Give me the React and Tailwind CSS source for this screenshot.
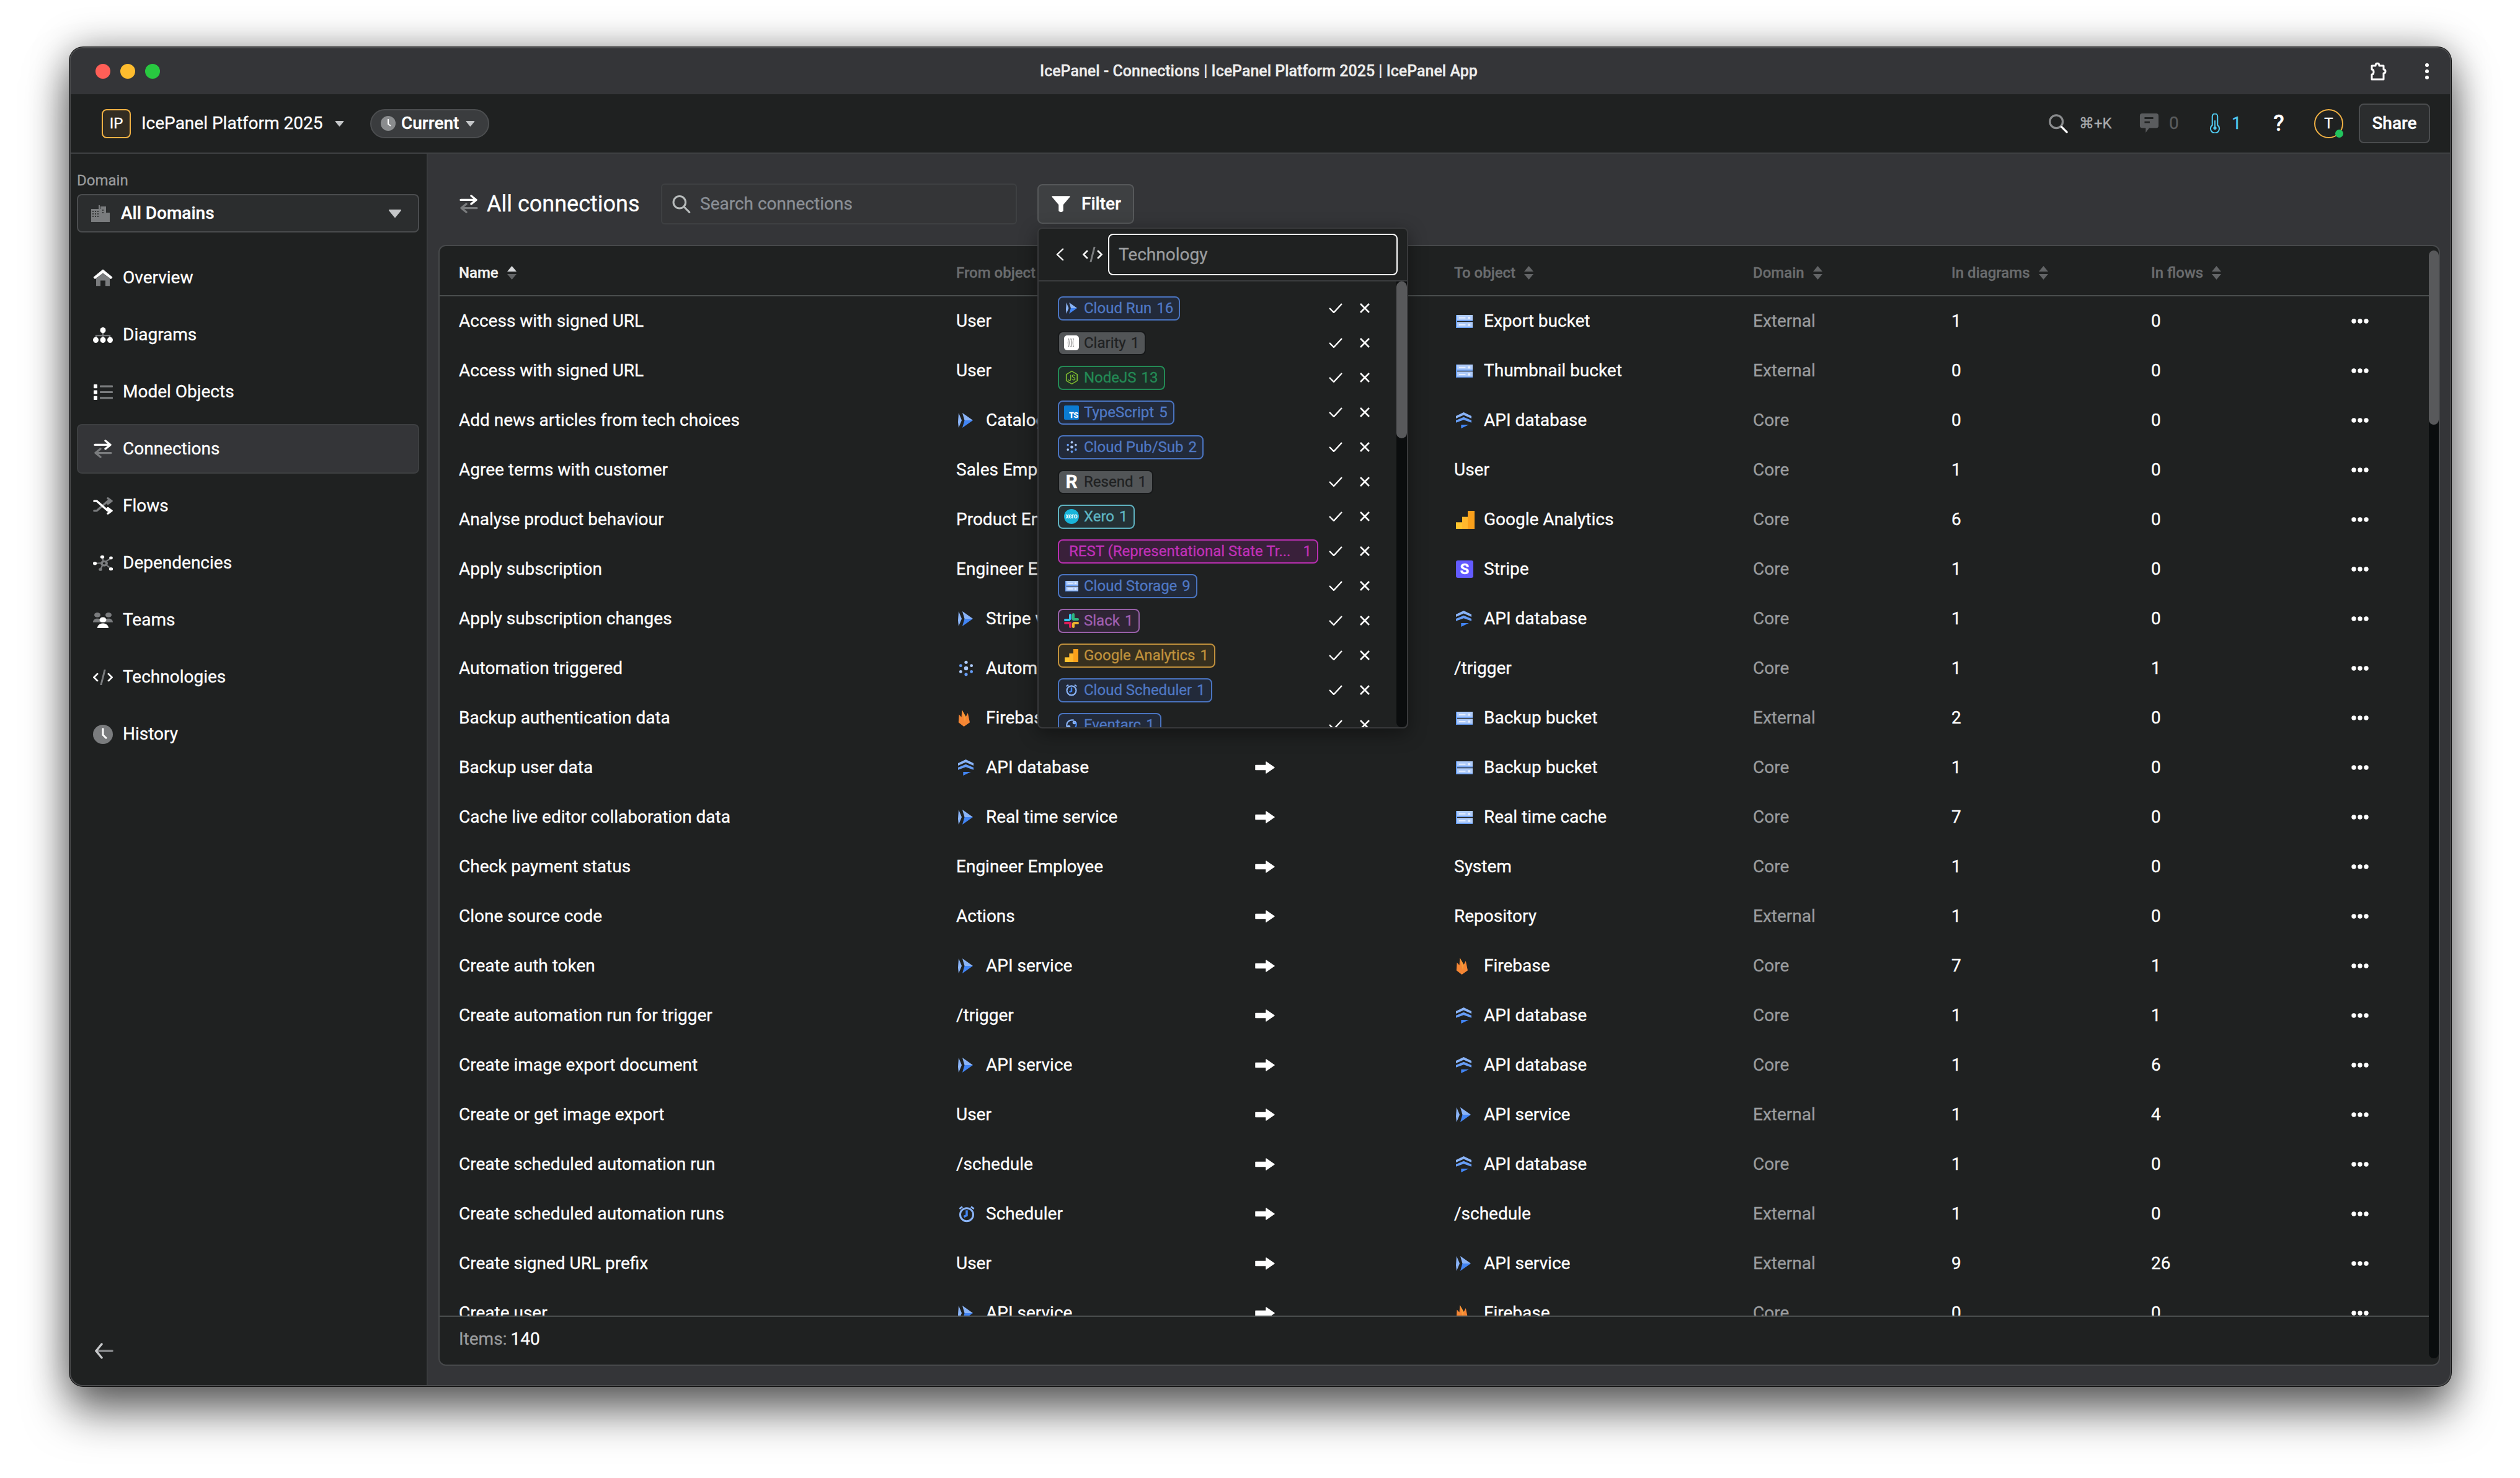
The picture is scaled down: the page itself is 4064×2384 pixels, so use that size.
import React from "react";

const Caret = ({ big }) => (
  <svg width={big ? 22 : 15} height={big ? 13 : 9} viewBox="0 0 22 13" className="shrink-0">
    <path d="M2 1 H20 L11 12 Z" fill="#c4c6c8" stroke="#c4c6c8" strokeWidth="2" strokeLinejoin="round" />
  </svg>
);

const W = "#ffffff";
const G = "#7a7c7e";

const NAV_H = { home: 28, diagrams: 25, list: 25, exchange: 30, flows: 28, deps: 26, teams: 25, code: 25, history: 31 };

const NavIcon = ({ k }) => {
  const p = { width: 32, height: NAV_H[k] || 31, viewBox: "0 0 32 32", preserveAspectRatio: "none", className: "shrink-0" };
  if (k === "home")
    return (
      <svg {...p}>
        <path d="M5 17 L16 8 L27 17 V31 H20 V21 H12 V31 H5 Z" fill={G} />
        <path d="M16 1 L31 15 L29 18 L16 7 L3 18 L1 15 Z" fill={W} stroke={W} strokeLinejoin="round" />
      </svg>
    );
  if (k === "diagrams")
    return (
      <svg {...p}>
        <path d="M16 10 V23 M5 23 V17 H27 V23" stroke={G} strokeWidth="2.4" fill="none" />
        <ellipse cx="16" cy="6" rx="4.5" ry="6" fill={W} />
        <ellipse cx="4.5" cy="26" rx="4.5" ry="6" fill={W} />
        <ellipse cx="16" cy="26" rx="4.5" ry="6" fill={W} />
        <ellipse cx="27.5" cy="26" rx="4.5" ry="6" fill={W} />
      </svg>
    );
  if (k === "list")
    return (
      <svg {...p}>
        <rect x="1" y="0" width="6" height="8" rx="1" fill={W} />
        <rect x="1" y="12" width="6" height="8" rx="1" fill={W} />
        <rect x="1" y="24" width="6" height="8" rx="1" fill={W} />
        <rect x="11" y="2" width="21" height="4" rx="1" fill={G} />
        <rect x="11" y="14" width="21" height="4" rx="1" fill={G} />
        <rect x="11" y="26" width="21" height="4" rx="1" fill={G} />
      </svg>
    );
  if (k === "exchange")
    return (
      <svg {...p} fill="none" strokeWidth="3.4" strokeLinecap="round" strokeLinejoin="round">
        <path d="M3 9 H27 M20 2 L28 9 L20 16" stroke={W} />
        <path d="M29 23 H5 M12 16 L4 23 L12 30" stroke={G} />
      </svg>
    );
  if (k === "flows")
    return (
      <svg {...p} fill="none" strokeWidth="3.6" strokeLinecap="round" strokeLinejoin="round">
        <path d="M2 25 H6 L24 7 H27 M24 2 L30 7 L24 12" stroke={G} />
        <path d="M2 7 H6 L24 25 H27 M24 20 L30 25 L24 30" stroke={W} />
      </svg>
    );
  if (k === "deps")
    return (
      <svg {...p}>
        <path d="M15 4 L17 16 M3 17 L17 16 M30 6 L17 16 M30 28 L17 16 M17 16 L12 29" stroke={G} strokeWidth="2.4" />
        <circle cx="18" cy="17" r="6" fill={G} />
        <circle cx="18" cy="17" r="2.2" fill="#1f2121" />
        <circle cx="15" cy="4" r="3.2" fill={W} />
        <circle cx="3" cy="17" r="3.2" fill={W} />
        <circle cx="29" cy="6" r="2.8" fill={W} />
        <circle cx="29" cy="28" r="3.2" fill={W} />
        <circle cx="12" cy="29" r="2.8" fill={G} />
      </svg>
    );
  if (k === "teams")
    return (
      <svg {...p}>
        <circle cx="7" cy="5" r="5" fill={G} />
        <circle cx="25" cy="5" r="5" fill={G} />
        <path d="M0 20 C0 10 14 10 14 20 Z M18 20 C18 10 32 10 32 20 Z" fill={G} />
        <circle cx="16" cy="15" r="5.5" fill={W} />
        <path d="M7 32 C7 19 25 19 25 32 Z" fill={W} />
      </svg>
    );
  if (k === "code")
    return (
      <svg {...p} fill="none" strokeWidth="3" strokeLinecap="round" strokeLinejoin="round">
        <path d="M7 9 L1.5 16 L7 23 M25 9 L30.5 16 L25 23" stroke={W} />
        <path d="M19 1 L13 31" stroke={G} />
      </svg>
    );
  return (
    <svg {...p}>
      <ellipse cx="16" cy="16" rx="16" ry="16" fill={G} />
      <path d="M16 7 V17 L21 22" stroke={W} strokeWidth="3" fill="none" strokeLinecap="round" />
    </svg>
  );
};

const RunIcon = ({ w = 24, h = 24 }) => (
  <svg width={w} height={h} viewBox="0 0 24 32" preserveAspectRatio="none" className="shrink-0">
    <path d="M1 0 L6 16 L1 32 L0 20 Z" fill="#8ab4f8" />
    <path d="M7 0 L24 16 H10.5 Z" fill="#8ab4f8" />
    <path d="M10.5 16 H24 L7 32 Z" fill="#4285f4" />
  </svg>
);
const DbIcon = ({ w = 25, h = 26 }) => (
  <svg width={w} height={h} viewBox="0 0 24 34" preserveAspectRatio="none" className="shrink-0">
    <path d="M12 0 L24 8 V13 L12 6 L0 13 V8 Z" fill="#8ab4f8" />
    <path d="M12 10 L24 17 V22 L12 16 L0 22 V17 Z" fill="#669df6" />
    <path d="M8 26 L20 26 L8 34 Z" fill="#4285f4" />
  </svg>
);
const StorageIcon = ({ w = 27, h = 21 }) => (
  <svg width={w} height={h} viewBox="0 0 28 28" preserveAspectRatio="none" className="shrink-0">
    <rect x="0" y="0" width="28" height="13" fill="#aecbfa" />
    <rect x="0" y="15" width="28" height="13" fill="#aecbfa" />
    <rect x="0" y="0" width="2" height="28" fill="#669df6" />
    <rect x="0" y="11" width="28" height="2" fill="#669df6" />
    <rect x="0" y="26" width="28" height="2" fill="#669df6" />
    <rect x="5" y="5" width="11" height="2.5" fill="#e8f0fe" />
    <rect x="20" y="4" width="4" height="4.5" fill="#e8f0fe" />
    <rect x="5" y="20" width="11" height="2.5" fill="#e8f0fe" />
    <rect x="20" y="19" width="4" height="4.5" fill="#e8f0fe" />
  </svg>
);
const FireIcon = () => (
  <svg width="19" height="27" viewBox="0 0 24 32" preserveAspectRatio="none" className="shrink-0">
    <path d="M2 9 L7 14 L8 0 L16 13 L20 6 L24 24 L12 32 L1 24 Z" fill="#f58634" />
    <path d="M8 0 L16 13 L14 24 Z" fill="#fbb03b" opacity="0.5" />
  </svg>
);
const GaIcon = ({ w = 30, h = 29 }) => (
  <svg width={w} height={h} viewBox="0 0 30 30" preserveAspectRatio="none" className="shrink-0">
    <rect x="0" y="19" width="11" height="11" fill="#ffc42e" />
    <rect x="10" y="10" width="10" height="20" fill="#ffb72d" />
    <rect x="19" y="0" width="11" height="30" fill="#f9a01b" />
  </svg>
);
const PubIcon = ({ w = 24, h = 24, c1 = "#aecbfa", c2 = "#669df6" }) => (
  <svg width={w} height={h} viewBox="0 0 24 24" preserveAspectRatio="none" className="shrink-0">
    <circle cx="12" cy="12" r="3" fill={c1} />
    <circle cx="12" cy="3" r="2.4" fill={c1} />
    <circle cx="4" cy="8" r="2.2" fill={c2} />
    <circle cx="20" cy="8" r="2.2" fill={c1} />
    <circle cx="4" cy="17" r="2.2" fill={c1} />
    <circle cx="20" cy="17" r="2.2" fill={c2} />
    <circle cx="12" cy="21" r="2.4" fill={c2} />
  </svg>
);
const SchedIcon = ({ s = 24 }) => (
  <svg width={s} height={s} viewBox="0 0 24 24" className="shrink-0" fill="none">
    <circle cx="12" cy="13" r="9" stroke="#8ab4f8" strokeWidth="2.6" />
    <path d="M12 7 V14 L8 16" stroke="#4285f4" strokeWidth="3" />
    <path d="M2 5 L6 2 M22 5 L18 2" stroke="#8ab4f8" strokeWidth="2.4" />
  </svg>
);
const StripeIcon = () => (
  <span className="w-[28px] h-[28px] shrink-0 rounded-[3px] bg-[#635bff] text-white text-[24px] font-bold leading-[28px] text-center">S</span>
);

const objIcon = (k) => {
  if (k === "run") return <RunIcon />;
  if (k === "db") return <DbIcon />;
  if (k === "st") return <StorageIcon />;
  if (k === "fire") return <FireIcon />;
  if (k === "ga") return <GaIcon />;
  if (k === "pub") return <PubIcon w={26} h={26} />;
  if (k === "sched") return <SchedIcon s={28} />;
  if (k === "stripe") return <StripeIcon />;
  return null;
};

const Obj = ({ t, i }) => (
  <div className="flex items-center whitespace-nowrap">
    {i ? <span className="w-[48px] pl-[3px] flex items-center shrink-0">{objIcon(i)}</span> : null}
    <span>{t}</span>
  </div>
);

const Arrow = () => (
  <svg width="32" height="20" viewBox="0 0 32 20">
    <path d="M1 6.5 H18 V1 L31 10 L18 19 V13.5 H1 Z" fill="#fff" stroke="#fff" strokeWidth="1.5" strokeLinejoin="round" />
  </svg>
);

const Sort = ({ active }) => (
  <svg width="17" height="22" viewBox="0 0 17 22" className="shrink-0">
    <path d="M8.5 0 L16 9 H1 Z" fill={active ? "#d8dadc" : "#626466"} />
    <path d="M8.5 22 L16 13 H1 Z" fill="#626466" />
  </svg>
);

const Dots = () => (
  <svg width="28" height="8" viewBox="0 0 28 8" className="justify-self-center">
    <circle cx="4" cy="4" r="3.7" fill="#fff" />
    <circle cx="14" cy="4" r="3.7" fill="#fff" />
    <circle cx="24" cy="4" r="3.7" fill="#fff" />
  </svg>
);

const rows = [
  ["Access with signed URL", "User", "", "Export bucket", "st", "External", 1, 0],
  ["Access with signed URL", "User", "", "Thumbnail bucket", "st", "External", 0, 0],
  ["Add news articles from tech choices", "Catalog service", "run", "API database", "db", "Core", 0, 0],
  ["Agree terms with customer", "Sales Employee", "", "User", "", "Core", 1, 0],
  ["Analyse product behaviour", "Product Engineer", "", "Google Analytics", "ga", "Core", 6, 0],
  ["Apply subscription", "Engineer Employee", "", "Stripe", "stripe", "Core", 1, 0],
  ["Apply subscription changes", "Stripe webhook", "run", "API database", "db", "Core", 1, 0],
  ["Automation triggered", "Automation", "pub", "/trigger", "", "Core", 1, 1],
  ["Backup authentication data", "Firebase", "fire", "Backup bucket", "st", "External", 2, 0],
  ["Backup user data", "API database", "db", "Backup bucket", "st", "Core", 1, 0],
  ["Cache live editor collaboration data", "Real time service", "run", "Real time cache", "st", "Core", 7, 0],
  ["Check payment status", "Engineer Employee", "", "System", "", "Core", 1, 0],
  ["Clone source code", "Actions", "", "Repository", "", "External", 1, 0],
  ["Create auth token", "API service", "run", "Firebase", "fire", "Core", 7, 1],
  ["Create automation run for trigger", "/trigger", "", "API database", "db", "Core", 1, 1],
  ["Create image export document", "API service", "run", "API database", "db", "Core", 1, 6],
  ["Create or get image export", "User", "", "API service", "run", "External", 1, 4],
  ["Create scheduled automation run", "/schedule", "", "API database", "db", "Core", 1, 0],
  ["Create scheduled automation runs", "Scheduler", "sched", "/schedule", "", "External", 1, 0],
  ["Create signed URL prefix", "User", "", "API service", "run", "External", 9, 26],
  ["Create user", "API service", "run", "Firebase", "fire", "Core", 0, 0],
];

const gridCols = "grid grid-cols-[802px_482px_321px_482px_320px_322px_320px_34px] items-center";

const Head = ({ t, active }) => (
  <div className={"flex items-center gap-[13px] text-[24px] font-medium " + (active ? "text-[#f0f0f0]" : "text-[#6a6c6e]")}>
    <span>{t}</span>
    <Sort active={active} />
  </div>
);

const ClarityIcon = () => (
  <span className="w-[24px] h-[24px] rounded-[5px] bg-white flex items-center justify-center shrink-0">
    <svg width="14" height="16" viewBox="0 0 16 18" fill="none" stroke="#666" strokeWidth="1">
      <path d="M3 1 C1 6 1 12 3 17 M6 1 C4 6 4 12 6 17 M9 1 C7 6 7 12 9 17 M12 1 C10 6 10 12 12 17" />
    </svg>
  </span>
);
const NodeIcon = () => (
  <svg width="21" height="22" viewBox="0 0 24 30" preserveAspectRatio="none" className="shrink-0" fill="none">
    <path d="M12 1 L22 8 V22 L12 29 L2 22 V8 Z" stroke="#7cb82f" strokeWidth="2" />
    <path d="M10 9 V19 C10 22 6 22 6 19 M18 11 C16 8 13 9 13 12 C13 15 18 14 18 18 C18 21 14 21 13 19" stroke="#7cb82f" strokeWidth="1.6" />
  </svg>
);
const TsIcon = () => (
  <span className="w-[24px] h-[23px] bg-[#0b7bd1] rounded-[2px] shrink-0 text-white text-[12px] font-bold leading-[14px] flex items-end justify-end pr-[1px]">TS</span>
);
const XeroIcon = () => (
  <span className="w-[24px] h-[24px] rounded-full bg-[#19b5da] shrink-0 text-white text-[10px] leading-[24px] text-center">xero</span>
);
const SlackIcon = () => (
  <svg width="24" height="24" viewBox="0 0 24 24" className="shrink-0">
    <rect x="0" y="9" width="10" height="4" rx="2" fill="#36c5f0" />
    <rect x="8" y="1" width="4" height="10" rx="2" fill="#36c5f0" />
    <rect x="13" y="0" width="4" height="11" rx="2" fill="#2eb67d" />
    <rect x="13" y="8" width="11" height="4" rx="2" fill="#2eb67d" />
    <rect x="14" y="14" width="10" height="4" rx="2" fill="#ecb22e" />
    <rect x="13" y="15" width="4" height="9" rx="2" fill="#ecb22e" />
    <rect x="8" y="14" width="4" height="10" rx="2" fill="#e01e5a" />
    <rect x="0" y="14" width="10" height="4" rx="2" fill="#e01e5a" />
  </svg>
);
const EventIcon = () => (
  <svg width="22" height="22" viewBox="0 0 24 24" className="shrink-0" fill="none" stroke="#8ab4f8" strokeWidth="2.4">
    <path d="M4 16 C2 8 8 2 16 4" />
    <path d="M20 8 C22 16 16 22 8 20" stroke="#4285f4" />
    <circle cx="7" cy="16" r="2" fill="#8ab4f8" />
    <circle cx="17" cy="8" r="2" fill="#4285f4" />
  </svg>
);

const blue = "border-[#4a74c0] bg-[#222a3a] text-[#4f78c4]";
const gray = "border-[#17191a] bg-[#525557] text-[#1f2122]";
const chips = [
  ["Cloud Run", 16, blue, <RunIcon w={18} h={18} />],
  ["Clarity", 1, gray, <ClarityIcon />],
  ["NodeJS", 13, "border-[#238a55] bg-[#1e2f28] text-[#238a55]", <NodeIcon />],
  ["TypeScript", 5, blue, <TsIcon />],
  ["Cloud Pub/Sub", 2, blue, <PubIcon w={19} h={20} />],
  ["Resend", 1, gray, <span className="w-[24px] text-white text-[30px] font-bold leading-none shrink-0 text-center">R</span>],
  ["Xero", 1, "border-[#5fb2c0] bg-[#243135] text-[#5fb7c4]", <XeroIcon />],
  ["REST (Representational State Tr...", 1, "border-[#b82fb0] bg-[#39203a] text-[#c030b8]", null],
  ["Cloud Storage", 9, blue, <StorageIcon w={21} h={17} />],
  ["Slack", 1, "border-[#9860a8] bg-[#2f2535] text-[#a05fb0]", <SlackIcon />],
  ["Google Analytics", 1, "border-[#c0903c] bg-[#37301f] text-[#c0923c]", <GaIcon w={22} h={21} />],
  ["Cloud Scheduler", 1, blue, <SchedIcon s={20} />],
  ["Eventarc", 1, blue, <EventIcon />],
];

const Chip = ({ c }) => {
  const rest = c[3] === null;
  return (
    <div className={"h-[39px] rounded-[8px] border-2 flex items-center text-[24px] whitespace-nowrap pr-[9px] " + c[2] + (rest ? " pl-[16px]" : " pl-[8px]")}>
      {c[3] ? <span className="w-[24px] flex justify-center mr-[8px] shrink-0">{c[3]}</span> : null}
      <span>{c[0]}</span>
      <span className={rest ? "ml-[20px]" : "ml-[8px]"}>{c[1]}</span>
    </div>
  );
};

export default function App() {
  return (
    <div className="w-[4064px] h-[2384px] bg-white overflow-hidden pt-[76px] pl-[112px] font-[family-name:Roboto,sans-serif] text-[28px] text-white [-webkit-text-stroke:0.3px]">
      <div className="relative w-[3841px] h-[2160px] rounded-[22px] overflow-hidden flex flex-col border-2 border-[#4b4c4e] bg-[#343538] shadow-[0_0_0_1px_#111111,0_42px_70px_rgba(0,0,0,0.55),0_0_60px_rgba(0,0,0,0.35)]">
        {/* title bar */}
        <div className="h-[74px] shrink-0 bg-[#343538] flex items-center pl-[40px] pr-[33px]">
          <div className="flex gap-[16px]">
            <span className="w-[24px] h-[24px] rounded-full bg-[#ff5f57]" />
            <span className="w-[24px] h-[24px] rounded-full bg-[#febc2e]" />
            <span className="w-[24px] h-[24px] rounded-full bg-[#28c840]" />
          </div>
          <div className="flex-1 text-center text-[25px] font-medium text-[#eeeeee] pr-[16px]">
            IcePanel - Connections | IcePanel Platform 2025 | IcePanel App
          </div>
          <svg width="32" height="32" viewBox="0 0 32 32" fill="none" stroke="#fff" strokeWidth="3" strokeLinejoin="round" className="mr-[60px]">
            <path d="M7 7 H13 C13 2 19 2 19 7 H26 V13 C30 13 30 19 26 19 V29 H7 V21 C11 21 11 13 7 13 Z" />
          </svg>
          <svg width="8" height="28" viewBox="0 0 8 28">
            <circle cx="4" cy="4" r="3" fill="#fff" />
            <circle cx="4" cy="14" r="3" fill="#fff" />
            <circle cx="4" cy="24" r="3" fill="#fff" />
          </svg>
        </div>

        {/* top bar */}
        <div className="h-[96px] shrink-0 bg-[#1f2121] border-b-2 border-[#3f4143] flex items-center pl-[50px] pr-[32px]">
          <div className="w-[47px] h-[47px] rounded-[8px] border-2 border-[#f2b244] bg-[#322c22] flex items-center justify-center text-[24px]">IP</div>
          <div className="ml-[17px] w-[312px] whitespace-nowrap">IcePanel Platform 2025</div>
          <Caret />
          <div className="ml-[42px] w-[192px] h-[47px] rounded-full border-2 border-[#4c4e50] bg-[#3a3c3e] flex items-center pl-[15px] font-medium">
            <svg width="24" height="24" viewBox="0 0 24 24" className="shrink-0">
              <circle cx="12" cy="12" r="12" fill="#8a8c8e" />
              <path d="M12 5 V13 L16 16" stroke="#fff" strokeWidth="2" fill="none" />
            </svg>
            <span className="ml-[9px] w-[104px]">Current</span>
            <Caret />
          </div>

          <svg width="32" height="32" viewBox="0 0 34 34" fill="none" className="ml-auto shrink-0">
            <circle cx="14" cy="14" r="11" stroke="#8a8c8e" strokeWidth="3.5" />
            <path d="M23 23 L32 32" stroke="#fff" strokeWidth="3.5" strokeLinecap="round" />
          </svg>
          <span className="ml-[18px] w-[50px] text-[24px] text-[#a8aaac] whitespace-nowrap">⌘+K</span>
          <svg width="32" height="32" viewBox="0 0 32 34" className="ml-[47px] shrink-0">
            <path d="M4 0 H28 A4 4 0 0 1 32 4 V21 A4 4 0 0 1 28 25 H16 L10 33 V25 H4 A4 4 0 0 1 0 21 V4 A4 4 0 0 1 4 0 Z" fill="#5a5c5e" />
            <path d="M8 8 H23 M8 15 H17" stroke="#1f2121" strokeWidth="3" />
          </svg>
          <span className="ml-[16px] w-[16px] text-[#5a5c5e]">0</span>
          <svg width="18" height="32" viewBox="0 0 18 34" fill="none" className="ml-[49px] shrink-0">
            <path d="M4.5 5 A4.5 4.5 0 0 1 13.5 5 V20 A7.5 7.5 0 1 1 4.5 20 Z" stroke="#4fc8ee" strokeWidth="2.2" />
            <path d="M9 12 V25" stroke="#4fc8ee" strokeWidth="2" />
            <circle cx="9" cy="25" r="2.8" fill="#4fc8ee" />
          </svg>
          <span className="ml-[18px] w-[16px] text-[#4fc8ee]">1</span>
          <span className="ml-[48px] w-[24px] text-center text-[36px] font-medium text-white">?</span>
          <div className="relative ml-[45px] w-[47px] h-[47px] rounded-full border-2 border-[#f2b244] flex items-center justify-center text-[24px]">
            T
            <span className="absolute right-[-2px] bottom-[-1px] w-[13px] h-[13px] rounded-full bg-[#22c45e]" />
          </div>
          <div className="ml-[25px] w-[115px] h-[64px] rounded-[8px] border-2 border-[#4a4c4e] bg-[#2b2d2e] flex items-center justify-center font-medium">Share</div>
        </div>

        <div className="flex-1 flex min-h-0">
          {/* sidebar */}
          <aside className="w-[576px] shrink-0 bg-[#1f2121] border-r-2 border-[#3a3c3e] flex flex-col pl-[10px] pr-[12px] pt-[29px] pb-[42px]">
            <div className="text-[24px] leading-[28px] text-[#9a9c9e]">Domain</div>
            <div className="mt-[8px] h-[62px] rounded-[8px] border-2 border-[#4a4c4e] bg-[#2b2d2e] flex items-center pl-[21px] pr-[26px] font-medium">
              <svg width="30" height="27" viewBox="0 0 30 27" className="shrink-0">
                <path d="M0 6 H12 V0 H14 V6 H15 V2 H24 V12 H30 V27 H0 Z" fill="#7a7c7e" />
                <path d="M3 9 V19 M7 9 V19 M11 9 V19 M19 7 V13" stroke="#1f2121" strokeWidth="1.5" strokeDasharray="2 2" />
              </svg>
              <span className="ml-[18px]">All Domains</span>
              <span className="ml-auto flex"><Caret big /></span>
            </div>
            <nav className="mt-[33px] flex flex-col gap-[12px]">
              {[
                ["home", "Overview"],
                ["diagrams", "Diagrams"],
                ["list", "Model Objects"],
                ["exchange", "Connections", true],
                ["flows", "Flows"],
                ["deps", "Dependencies"],
                ["teams", "Teams"],
                ["code", "Technologies"],
                ["history", "History"],
              ].map(([k, t, a]) => (
                <div key={t} className={"h-[80px] rounded-[8px] border-2 flex items-center pl-[24px] " + (a ? "bg-[#343538] border-[#3d3f41]" : "border-transparent")}>
                  <NavIcon k={k} />
                  <span className="ml-[16px]">{t}</span>
                </div>
              ))}
            </nav>
            <svg width="30" height="26" viewBox="0 0 30 26" fill="none" strokeLinecap="round" strokeLinejoin="round" className="mt-auto ml-[29px]">
              <path d="M2 13 H28" stroke="#8a8c8e" strokeWidth="3.5" />
              <path d="M11 2 L2 13 L11 24" stroke="#c8cacc" strokeWidth="3.5" />
            </svg>
          </aside>

          {/* main */}
          <main className="flex-1 min-w-0 flex flex-col pl-[17px] pr-[16px] pt-[48px] pb-[31px]">
            <div className="h-[66px] shrink-0 flex items-center pl-[33px]">
              <NavIcon k="exchange" />
              <div className="ml-[13px] w-[281px] text-[36px] whitespace-nowrap">All connections</div>
              <div className="w-[574px] h-[66px] rounded-[6px] border-2 border-[#3e4042] bg-[#343537] flex items-center pl-[14px] text-[#8a8f96]">
                <svg width="33" height="32" viewBox="0 0 36 36" fill="none" className="shrink-0">
                  <circle cx="15" cy="15" r="11" stroke="#b8bcbc" strokeWidth="3.4" />
                  <path d="M23 23 L33 33" stroke="#b8bcbc" strokeWidth="3.4" strokeLinecap="round" />
                </svg>
                <span className="ml-[14px]">Search connections</span>
              </div>
              <div className="ml-[33px] w-[156px] h-[64px] rounded-[8px] border-2 border-[#56585a] bg-[#3e4042] flex items-center pl-[20px] font-medium">
                <svg width="32" height="28" viewBox="0 0 32 28" className="shrink-0">
                  <path d="M2 2 H30 L19 15 V25 Q16 28 13 25 V15 Z" fill="#fff" stroke="#fff" strokeWidth="1.5" strokeLinejoin="round" />
                </svg>
                <span className="ml-[17px]">Filter</span>
              </div>
            </div>

            <div className="mt-[33px] flex-1 min-h-0 flex rounded-[12px] border-2 border-[#47494b] bg-[#1f2121] overflow-hidden">
              <div className="flex-1 min-w-0 flex flex-col">
                <div className={gridCols + " h-[81px] shrink-0 border-b-2 border-[#4a4e4e] pl-[31px] pt-[7px]"}>
                  <Head t="Name" active />
                  <Head t="From object" />
                  <div />
                  <Head t="To object" />
                  <Head t="Domain" />
                  <Head t="In diagrams" />
                  <Head t="In flows" />
                  <div />
                </div>
                <div className="flex-1 min-h-0 overflow-hidden">
                  {rows.map((r, i) => (
                    <div key={i} className={gridCols + " h-[80px] pl-[31px]"}>
                      <div className="whitespace-nowrap">{r[0]}</div>
                      <Obj t={r[1]} i={r[2]} />
                      <Arrow />
                      <Obj t={r[3]} i={r[4]} />
                      <div className="text-[#9a9c9e]">{r[5]}</div>
                      <div>{r[6]}</div>
                      <div>{r[7]}</div>
                      <Dots />
                    </div>
                  ))}
                </div>
                <div className="h-[79px] shrink-0 border-t-2 border-[#4a4e4e] flex items-center pl-[31px] pb-[6px]">
                  <span className="text-[#9a9c9e]">Items:</span>
                  <span className="ml-[6px]">140</span>
                </div>
              </div>
              <div className="w-[16px] shrink-0 pt-[7px] pb-[10px]">
                <div className="h-full rounded-full bg-[#0a0d0e]">
                  <div className="h-[281px] rounded-full bg-[#58595b]" />
                </div>
              </div>
            </div>
          </main>
        </div>

        {/* filter popover */}
        <div className="absolute left-[1559px] top-[289px] w-[598px] h-[808px] rounded-[8px] border-2 border-[#38393b] bg-[#1f2121] overflow-hidden flex flex-col shadow-[0_8px_30px_rgba(0,0,0,0.4)]">
          <div className="h-[85px] shrink-0 border-b-2 border-[#3a3c3e] flex items-center">
            <svg width="13" height="21" viewBox="0 0 14 24" preserveAspectRatio="none" fill="none" stroke="#fff" strokeWidth="2.6" strokeLinecap="round" strokeLinejoin="round" className="ml-[28px]">
              <path d="M12 2 L2 12 L12 22" />
            </svg>
            <span className="ml-[30px] flex"><NavIcon k="code" /></span>
            <div className="ml-[9px] w-[467px] h-[67px] rounded-[8px] border-[2.5px] border-white flex items-center pl-[15px] text-[#9a9c9e]">Technology</div>
          </div>
          <div className="flex-1 min-h-0 flex">
            <div className="flex-1 min-w-0 overflow-hidden pt-[15px]">
              {chips.map((c, i) => (
                <div key={i} className="h-[56px] flex items-center pl-[31px] pr-[43px]">
                  <Chip c={c} />
                  <svg width="22" height="16" viewBox="0 0 22 16" fill="none" stroke="#fff" strokeWidth="2.4" className="ml-auto shrink-0">
                    <path d="M1 8 L8 15 L21 1" />
                  </svg>
                  <svg width="16" height="16" viewBox="0 0 16 16" fill="none" stroke="#fff" strokeWidth="2.6" className="ml-[28px] shrink-0">
                    <path d="M1 1 L15 15 M15 1 L1 15" />
                  </svg>
                </div>
              ))}
            </div>
            <div className="w-[17px] shrink-0 bg-[#0b0d0e] rounded-b-[8px]">
              <div className="h-[253px] rounded-full bg-[#58595b]" />
            </div>
          </div>
        </div>
      </div>
    </div>
  );
}
